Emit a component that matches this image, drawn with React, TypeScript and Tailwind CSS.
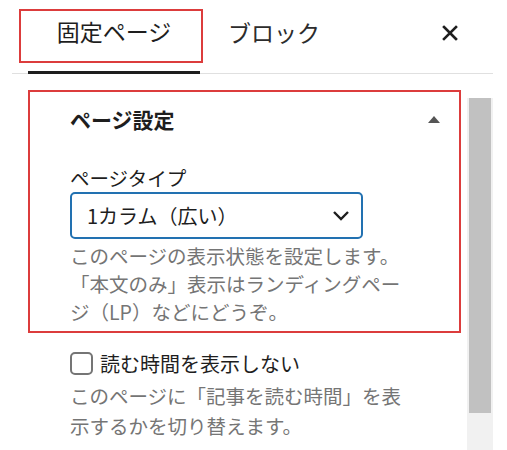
import React from 'react'

const desc = 'text-[19.5px] leading-[28px] text-[#757575]'

function CloseIcon() {
  return (
    <svg width="16" height="16" viewBox="0 0 16 16" fill="none">
      <path d="M2 2 L14 14 M14 2 L2 14" stroke="#1e1e1e" strokeWidth="2.6" strokeLinecap="square" />
    </svg>
  )
}

function Chevron() {
  return (
    <svg width="18" height="11" viewBox="0 0 18 11" fill="none">
      <path d="M2 2 L9 9 L16 2" stroke="#1e1e1e" strokeWidth="2.4" />
    </svg>
  )
}

export default function App() {
  return (
    <div className="w-[507px] h-[450px] overflow-hidden bg-white font-['Noto_Sans_CJK_JP','Noto_Sans',sans-serif] text-[#1e1e1e]">
      {/* tabs */}
      <div className="flex items-stretch h-[74px] ml-[12px] mr-[14px] border-b border-[#e0e0e0]">
        <button className="relative ml-[16px] w-[172px] -mb-px border-b-[3px] border-[#1e1e1e] flex items-center justify-center pb-[8px] text-[23px] leading-none">
          固定ページ
          <span className="absolute left-[-9px] top-[9px] w-[184px] h-[54px] border-2 border-[#dc3c3c]" />
        </button>
        <button className="px-[28px] flex items-center pb-[8px] text-[23px] leading-none text-[#2c2c2c]">ブロック</button>
        <button className="ml-auto mr-[35px] flex items-center pb-[7px]">
          <CloseIcon />
        </button>
      </div>

      <div className="flex pl-[28px] pt-[16px]">
        <div className="w-[433px]">
          {/* panel */}
          <div className="border-2 border-[#dc3c3c] pl-[40px] pr-[19px] pb-[5px]">
            <div className="h-[54px] flex items-center justify-between">
              <span className="text-[21px] font-bold leading-none">ページ設定</span>
              <span className="w-0 h-0 border-l-[6px] border-r-[6px] border-b-[7px] border-l-transparent border-r-transparent border-b-[#555]" />
            </div>
            <div className="mt-[20px] text-[19.5px] leading-[24px]">ページタイプ</div>
            <div className="mt-[2px] w-[293px] h-[47px] border-2 border-[#2271b1] rounded-[5px] flex items-center justify-between pl-[15px] pr-[11px]">
              <span className="text-[20px] leading-none">1カラム（広い）</span>
              <Chevron />
            </div>
            <div className={`mt-[3px] w-[345px] ${desc}`}>
              このページの表示状態を設定します。「本文のみ」表示はランディングページ（LP）などにどうぞ。
            </div>
          </div>

          {/* checkbox */}
          <div className="pl-[42px]">
            <label className="mt-[19px] flex items-center gap-[7px]">
              <span className="w-[23px] h-[23px] border-2 border-[#757575] rounded-[5px] bg-white" />
              <span className="text-[20px] leading-none">読む時間を表示しない</span>
            </label>
            <div className="mt-[6px] w-[345px] text-[19.5px] leading-[30px] text-[#757575]">
              このページに「記事を読む時間」を表示するかを切り替えます。
            </div>
          </div>
        </div>

        {/* scrollbar */}
        <div className="ml-[6px] mt-[8px] w-[26px] h-[360px] bg-[#f1f1f1] px-[2px]">
          <div className="h-[315px] bg-[#c1c1c1]" />
        </div>
      </div>
    </div>
  )
}
